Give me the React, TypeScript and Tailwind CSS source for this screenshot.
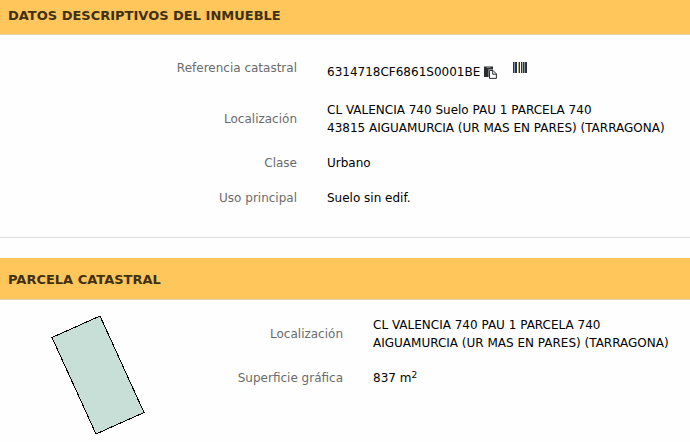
import type { ReactNode } from "react";

function SectionHeader({ children, className = "" }: { children: ReactNode; className?: string }) {
  return (
    <h2 className={`border-b border-[#e4cfa8] bg-[#fec65b] px-2 text-[13px] leading-[18px] font-bold text-[#40300f] ${className}`}>
      {children}
    </h2>
  );
}

function Label({ children, className = "self-center" }: { children: ReactNode; className?: string }) {
  return <dt className={`text-right text-[#6b6b6b] ${className}`}>{children}</dt>;
}

function CopyIcon() {
  return (
    <svg viewBox="0 0 13 13" className="size-[13px]" aria-hidden="true">
      <path d="M0 0.5H9V3.4H4.6V11H0Z" fill="#292d2f" />
      <path d="M2.5 1.6H6.5" stroke="#999" strokeWidth=".8" />
      <path d="M5.5 4.5H9L12.4 7.9V12.4H5.5Z" fill="#fff" stroke="#292d2f" strokeWidth="1" />
      <path d="M8.7 4.5V8.2H12.4" fill="none" stroke="#292d2f" strokeWidth="1" />
    </svg>
  );
}

function BarcodeIcon() {
  return (
    <svg viewBox="0 0 14 11" className="h-[11px] w-[14px]" aria-hidden="true">
      <path d="M0 0H1V11H0ZM2 0H4V11H2ZM6 0H7V11H6ZM8 0H9V11H8ZM10 0H11V11H10ZM12 0H14V11H12Z" fill="#303238" />
      <path d="M5 0H6V11H5ZM9 0H10V11H9Z" fill="#b4ac91" />
      <path d="M11 0H12V11H11ZM1 0H2V11H1Z" fill="#7c91a9" />
    </svg>
  );
}

export default function App() {
  return (
    <main className="min-h-screen bg-[#fefefe] font-['Verdana','DejaVu_Sans',sans-serif] text-[12px] leading-[18px] text-black">
      <section className="border-b border-[#dedede] pb-[30px]">
        <SectionHeader className="pt-[7px] pb-[9px]">DATOS DESCRIPTIVOS DEL INMUEBLE</SectionHeader>
        <dl className="grid grid-cols-[297px_1fr] gap-x-[30px] gap-y-[17px] pt-6">
          <Label className="self-start">Referencia catastral</Label>
          <dd className="flex items-start pt-1 pb-[3px]">
            <span>6314718CF6861S0001BE</span>
            <button type="button" aria-label="Copiar referencia catastral" className="ml-1 pt-[3px]">
              <CopyIcon />
            </button>
            <button type="button" aria-label="Ver código de barras" className="-mt-1 ml-4 pt-[3px]">
              <BarcodeIcon />
            </button>
          </dd>
          <Label>Localización</Label>
          <dd>
            CL VALENCIA 740 Suelo PAU 1 PARCELA 740
            <br />
            43815 AIGUAMURCIA (UR MAS EN PARES) (TARRAGONA)
          </dd>
          <Label>Clase</Label>
          <dd>Urbano</dd>
          <Label>Uso principal</Label>
          <dd>Suelo sin edif.</dd>
        </dl>
      </section>
      <section className="pt-5">
        <SectionHeader className="pt-[13px] pb-[10px]">PARCELA CATASTRAL</SectionHeader>
        <div className="flex items-start gap-[30px] pt-4">
          <svg viewBox="0 0 94 121" className="ml-[51px] h-[121px] w-[94px] shrink-0" role="img" aria-label="Croquis de la parcela" shapeRendering="crispEdges">
            <path d="M1 21.5L49 0L93 96.5L45 118Z" fill="#c8dfd7" stroke="#000" strokeWidth="1" />
          </svg>
          <dl className="grid flex-1 grid-cols-[168px_1fr] gap-x-[30px] gap-y-[17px]">
            <Label>Localización</Label>
            <dd>
              CL VALENCIA 740 PAU 1 PARCELA 740
              <br />
              AIGUAMURCIA (UR MAS EN PARES) (TARRAGONA)
            </dd>
            <Label>Superficie gráfica</Label>
            <dd>
              837 m<sup className="text-[9px]">2</sup>
            </dd>
          </dl>
        </div>
      </section>
    </main>
  );
}
